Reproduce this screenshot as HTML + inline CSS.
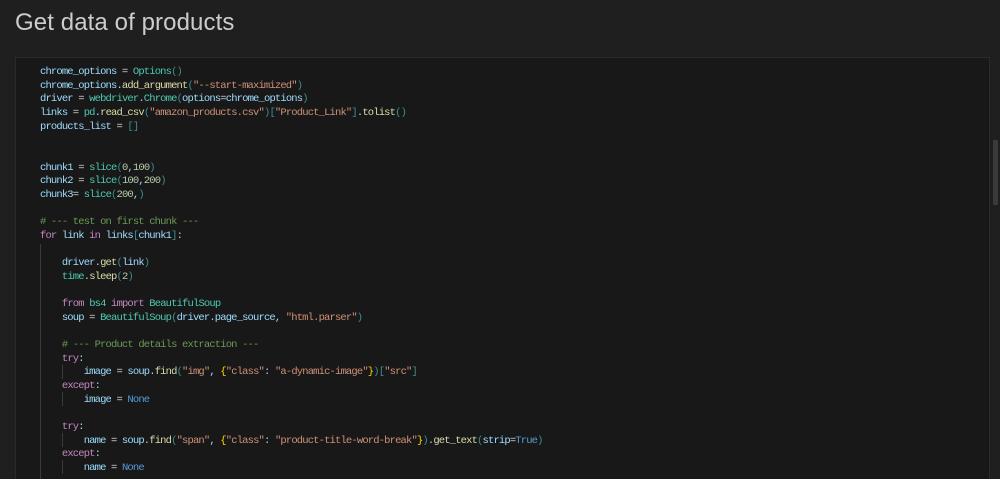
<!DOCTYPE html>
<html><head><style>
html,body{margin:0;width:1000px;height:479px;overflow:hidden}
body{background:#1f1f1f;position:relative;font-family:"Liberation Sans",sans-serif}
h1{position:absolute;left:15px;top:9px;margin:0;font-weight:normal;font-size:24px;color:#cccccc;letter-spacing:0.1px}
.box{position:absolute;left:15px;top:57px;width:973px;height:440px;background:#181818;border:1px solid #2b2b2b}
pre{position:absolute;left:40px;top:66px;margin:0;font-family:"Liberation Mono",monospace;font-size:10.5px;letter-spacing:-0.84px;line-height:13.65px;color:#9cdcfe}
.g{position:absolute;width:1px;background:#3a3a3a}
.sb{position:absolute;left:993px;top:140px;width:5px;height:65px;background:#3a3a3a;border-radius:1px}
.f{color:#dcdcaa}.c{color:#4ec9b0}.s{color:#ce9178}.k{color:#c586c0}.m{color:#6a9955}.n{color:#569cd6}.o{color:#d4d4d4}.p{color:#3b8e8e}.y{color:#ffd700}.b{color:#b5cea8}
</style></head><body>
<h1>Get data of products</h1>
<div class="box"></div>
<div class="g" style="left:40px;top:244px;height:237px"></div>
<div class="g" style="left:62px;top:365px;height:14px"></div>
<div class="g" style="left:62px;top:392px;height:14px"></div>
<div class="g" style="left:62px;top:433px;height:14px"></div>
<div class="g" style="left:62px;top:460px;height:14px"></div>
<div class="sb"></div>
<pre>chrome_options <span class="o">=</span> <span class="c">Options</span><span class="p">()</span>
chrome_options.<span class="f">add_argument</span><span class="p">(</span><span class="s">"--start-maximized"</span><span class="p">)</span>
driver <span class="o">=</span> <span class="c">webdriver</span>.<span class="c">Chrome</span><span class="p">(</span>options<span class="o">=</span>chrome_options<span class="p">)</span>
links <span class="o">=</span> <span class="c">pd</span>.<span class="f">read_csv</span><span class="p">(</span><span class="s">"amazon_products.csv"</span><span class="p">)[</span><span class="s">"Product_Link"</span><span class="p">]</span>.<span class="f">tolist</span><span class="p">()</span>
products_list <span class="o">=</span> <span class="p">[]</span>


chunk1 <span class="o">=</span> <span class="c">slice</span><span class="p">(</span><span class="b">0</span>,<span class="b">100</span><span class="p">)</span>
chunk2 <span class="o">=</span> <span class="c">slice</span><span class="p">(</span><span class="b">100</span>,<span class="b">200</span><span class="p">)</span>
chunk3<span class="o">=</span> <span class="c">slice</span><span class="p">(</span><span class="b">200</span>,<span class="p">)</span>

<span class="m"># --- test on first chunk ---</span>
<span class="k">for</span> link <span class="k">in</span> links<span class="p">[</span>chunk1<span class="p">]</span>:

    driver.<span class="f">get</span><span class="p">(</span>link<span class="p">)</span>
    <span class="c">time</span>.<span class="f">sleep</span><span class="p">(</span><span class="b">2</span><span class="p">)</span>

    <span class="k">from</span> <span class="c">bs4</span> <span class="k">import</span> <span class="c">BeautifulSoup</span>
    soup <span class="o">=</span> <span class="c">BeautifulSoup</span><span class="p">(</span>driver.page_source, <span class="s">"html.parser"</span><span class="p">)</span>

    <span class="m"># --- Product details extraction ---</span>
    <span class="k">try</span>:
        image <span class="o">=</span> soup.<span class="f">find</span><span class="p">(</span><span class="s">"img"</span>, <span class="y">{</span><span class="s">"class"</span>: <span class="s">"a-dynamic-image"</span><span class="y">}</span><span class="p">)[</span><span class="s">"src"</span><span class="p">]</span>
    <span class="k">except</span>:
        image <span class="o">=</span> <span class="n">None</span>

    <span class="k">try</span>:
        name <span class="o">=</span> soup.<span class="f">find</span><span class="p">(</span><span class="s">"span"</span>, <span class="y">{</span><span class="s">"class"</span>: <span class="s">"product-title-word-break"</span><span class="y">}</span><span class="p">)</span>.<span class="f">get_text</span><span class="p">(</span>strip<span class="o">=</span><span class="n">True</span><span class="p">)</span>
    <span class="k">except</span>:
        name <span class="o">=</span> <span class="n">None</span></pre>
</body></html>
